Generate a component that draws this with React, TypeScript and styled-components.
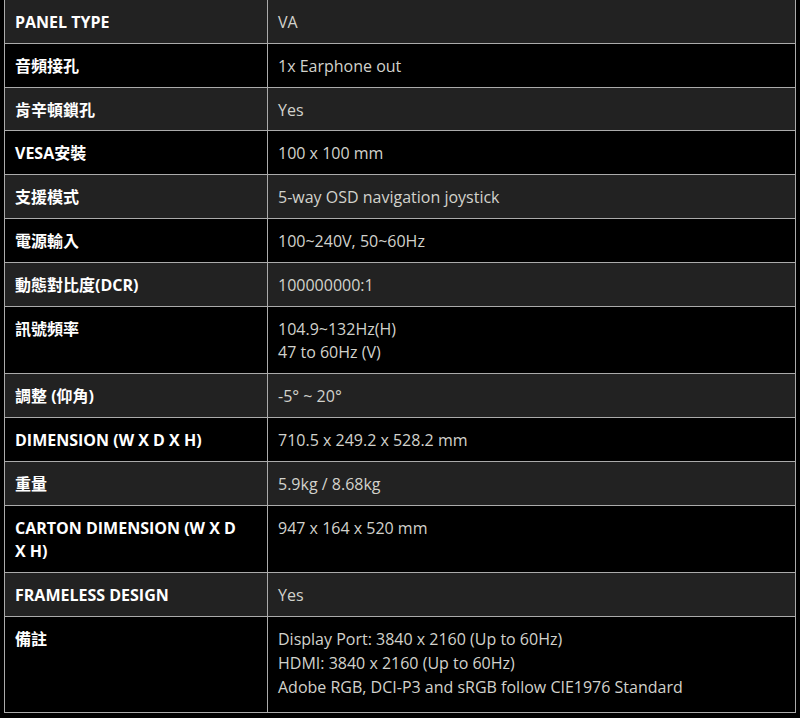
import React from "react";
import styled, { createGlobalStyle } from "styled-components";

const GlobalStyle = createGlobalStyle`
  html, body {
    margin: 0;
    padding: 0;
    background: #000;
  }
  body {
    font-family: "Open Sans", "Noto Sans CJK TC", sans-serif;
  }
`;

const Page = styled.div`
  padding: 0 4px;
  margin-top: -1px;
  background: #000;
`;

const Table = styled.table`
  width: 792px;
  border-collapse: collapse;
  table-layout: fixed;
  font-family: "Open Sans", "Noto Sans CJK TC", sans-serif;
  font-size: 16px;
  line-height: 23.8px;
`;

const Row = styled.tr<{ $shade: boolean }>`
  background: ${(p) => (p.$shade ? "#222222" : "#000000")};
`;

const LabelCell = styled.th`
  width: 263px;
  box-sizing: border-box;
  border: 1px solid #ababab;
  padding: 11px 20px 8px 10px;
  text-align: left;
  vertical-align: top;
  color: #ffffff;
  font-weight: 700;
`;

const ValueCell = styled.td<{ $tail?: number }>`
  border: 1px solid #ababab;
  padding: 11px 10px ${(p) => 8 + (p.$tail ?? 0)}px 10px;
  vertical-align: top;
  color: #d2d2cc;
  font-weight: 400;
`;

const Line = styled.div`
  white-space: nowrap;
`;

type Spec = { label: string; values: string[]; tail?: number };

const specs: Spec[] = [
  { label: "PANEL TYPE", values: ["VA"] },
  { label: "音頻接孔", values: ["1x Earphone out"] },
  { label: "肯辛頓鎖孔", values: ["Yes"] },
  { label: "VESA安裝", values: ["100 x 100 mm"] },
  { label: "支援模式", values: ["5-way OSD navigation joystick"] },
  { label: "電源輸入", values: ["100~240V, 50~60Hz"] },
  { label: "動態對比度(DCR)", values: ["100000000:1"] },
  { label: "訊號頻率", values: ["104.9~132Hz(H)", "47 to 60Hz (V)"] },
  { label: "調整 (仰角)", values: ["-5° ~ 20°"] },
  { label: "DIMENSION (W X D X H)", values: ["710.5 x 249.2 x 528.2 mm"] },
  { label: "重量", values: ["5.9kg / 8.68kg"] },
  { label: "CARTON DIMENSION (W X D X H)", values: ["947 x 164 x 520 mm"] },
  { label: "FRAMELESS DESIGN", values: ["Yes"] },
  {
    label: "備註",
    values: [
      "Display Port: 3840 x 2160 (Up to 60Hz)",
      "HDMI: 3840 x 2160 (Up to 60Hz)",
      "Adobe RGB, DCI-P3 and sRGB follow CIE1976 Standard",
    ],
    tail: 5,
  },
];

export default function App() {
  return (
    <Page>
      <GlobalStyle />
      <Table>
        <tbody>
          {specs.map((s, i) => (
            <Row key={s.label} $shade={i % 2 === 0}>
              <LabelCell>{s.label}</LabelCell>
              <ValueCell $tail={s.tail}>
                {s.values.map((v) => (
                  <Line key={v}>{v}</Line>
                ))}
              </ValueCell>
            </Row>
          ))}
        </tbody>
      </Table>
    </Page>
  );
}
